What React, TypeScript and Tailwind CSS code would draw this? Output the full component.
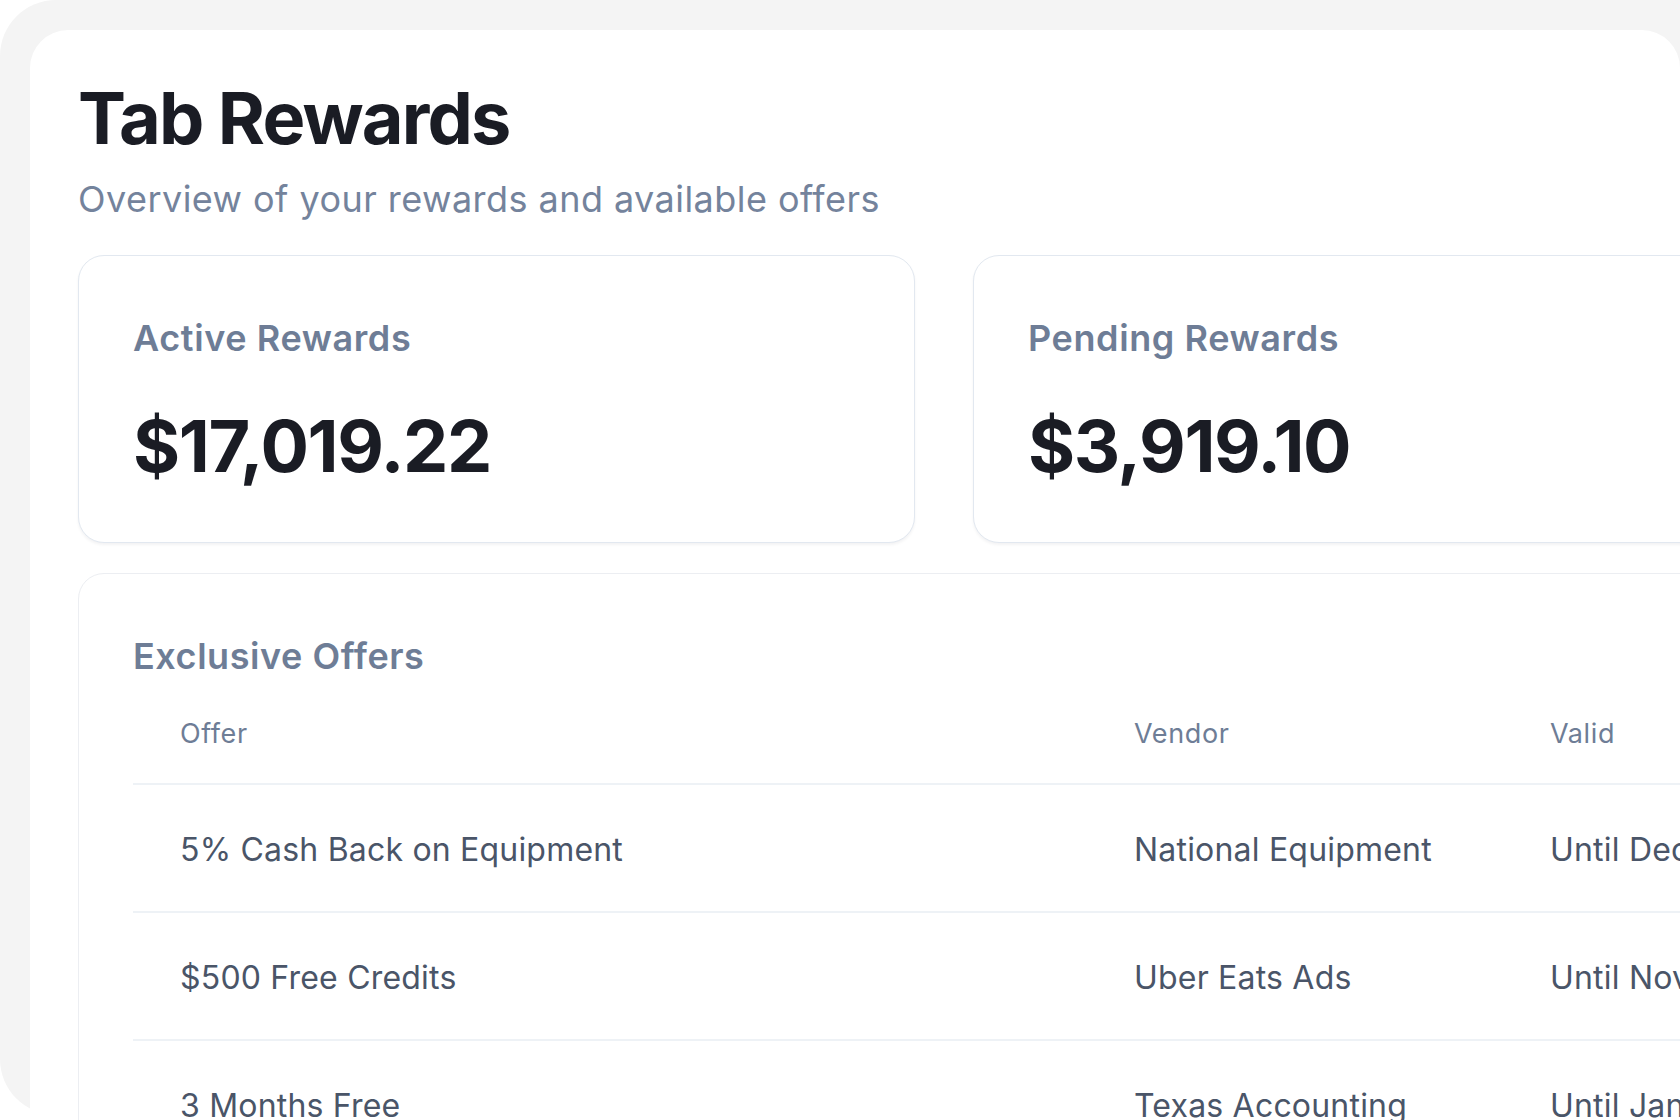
const rewards = [
  { label: 'Active Rewards', amount: '$17,019.22' },
  { label: 'Pending Rewards', amount: '$3,919.10' },
]

const offers = [
  { offer: '5% Cash Back on Equipment', vendor: 'National Equipment', valid: 'Until Dec 31, 2025' },
  { offer: '$500 Free Credits', vendor: 'Uber Eats Ads', valid: 'Until Nov 30, 2025' },
  { offer: '3 Months Free', vendor: 'Texas Accounting', valid: 'Until Jan 15, 2026' },
]

export default function App() {
  return (
    <div className="w-[1680px] h-[1120px] overflow-hidden bg-white font-['Inter','Noto_Sans',sans-serif] antialiased">
      {/* Outer frame */}
      <div className="w-[1760px] h-[1115px] rounded-[56px] bg-[#f4f4f4] pl-[30px] pt-[30px]">
        {/* Main panel */}
        <div className="w-[1650px] h-[1200px] rounded-t-[38px] bg-white pl-[48px] pt-[52px] overflow-hidden">
          <h1 className="text-[72px] leading-[72px] font-bold tracking-[-1.8px] text-[#1a1c24]">Tab Rewards</h1>
          <p className="mt-[24px] text-[36px] leading-[42px] tracking-[0.45px] text-[#74839c]">
            Overview of your rewards and available offers
          </p>

          {/* Summary cards */}
          <div className="mt-[35px] flex gap-[58px]">
            {rewards.map((r) => (
              <div
                key={r.label}
                className="flex-none w-[837px] rounded-[26px] border border-[#e2e8f0] bg-white pl-[54px] pt-[60px] pb-[60px] shadow-[0_2px_3px_rgba(15,23,42,0.05)]"
              >
                <div className="text-[36px] leading-[44px] font-semibold tracking-[0.6px] text-[#6e7d96]">{r.label}</div>
                <div className="mt-[50px] text-[72px] leading-[72px] font-bold tracking-[-1.4px] text-[#1a1c24]">
                  {r.amount}
                </div>
              </div>
            ))}
          </div>

          {/* Offers table */}
          <div className="mt-[30px] w-[1700px] rounded-[26px] border border-[#eceef2] bg-white pl-[54px] pt-[60px]">
            <h2 className="text-[36px] leading-[44px] font-semibold tracking-[0.55px] text-[#6e7d96]">Exclusive Offers</h2>
            <div className="mt-[7px]">
              <div className="grid grid-cols-[954px_416px_1fr] border-b-2 border-[#eef2f6] text-[27px] leading-[36px] tracking-[0.6px] text-[#6e7d96]">
                <div className="pl-[47px] py-[31px]">Offer</div>
                <div className="pl-[47px] py-[31px]">Vendor</div>
                <div className="pl-[47px] py-[31px]">Valid</div>
              </div>
              {offers.map((o) => (
                <div
                  key={o.offer}
                  className="grid grid-cols-[954px_416px_1fr] border-b-2 border-[#eef2f6] text-[32px] leading-[40px] tracking-[0.2px] text-[#4a5568]"
                >
                  <div className="pl-[47px] pt-[45px] pb-[41px] whitespace-nowrap">{o.offer}</div>
                  <div className="pl-[47px] pt-[45px] pb-[41px] whitespace-nowrap">{o.vendor}</div>
                  <div className="pl-[47px] pt-[45px] pb-[41px] whitespace-nowrap">{o.valid}</div>
                </div>
              ))}
            </div>
          </div>
        </div>
      </div>
    </div>
  )
}
